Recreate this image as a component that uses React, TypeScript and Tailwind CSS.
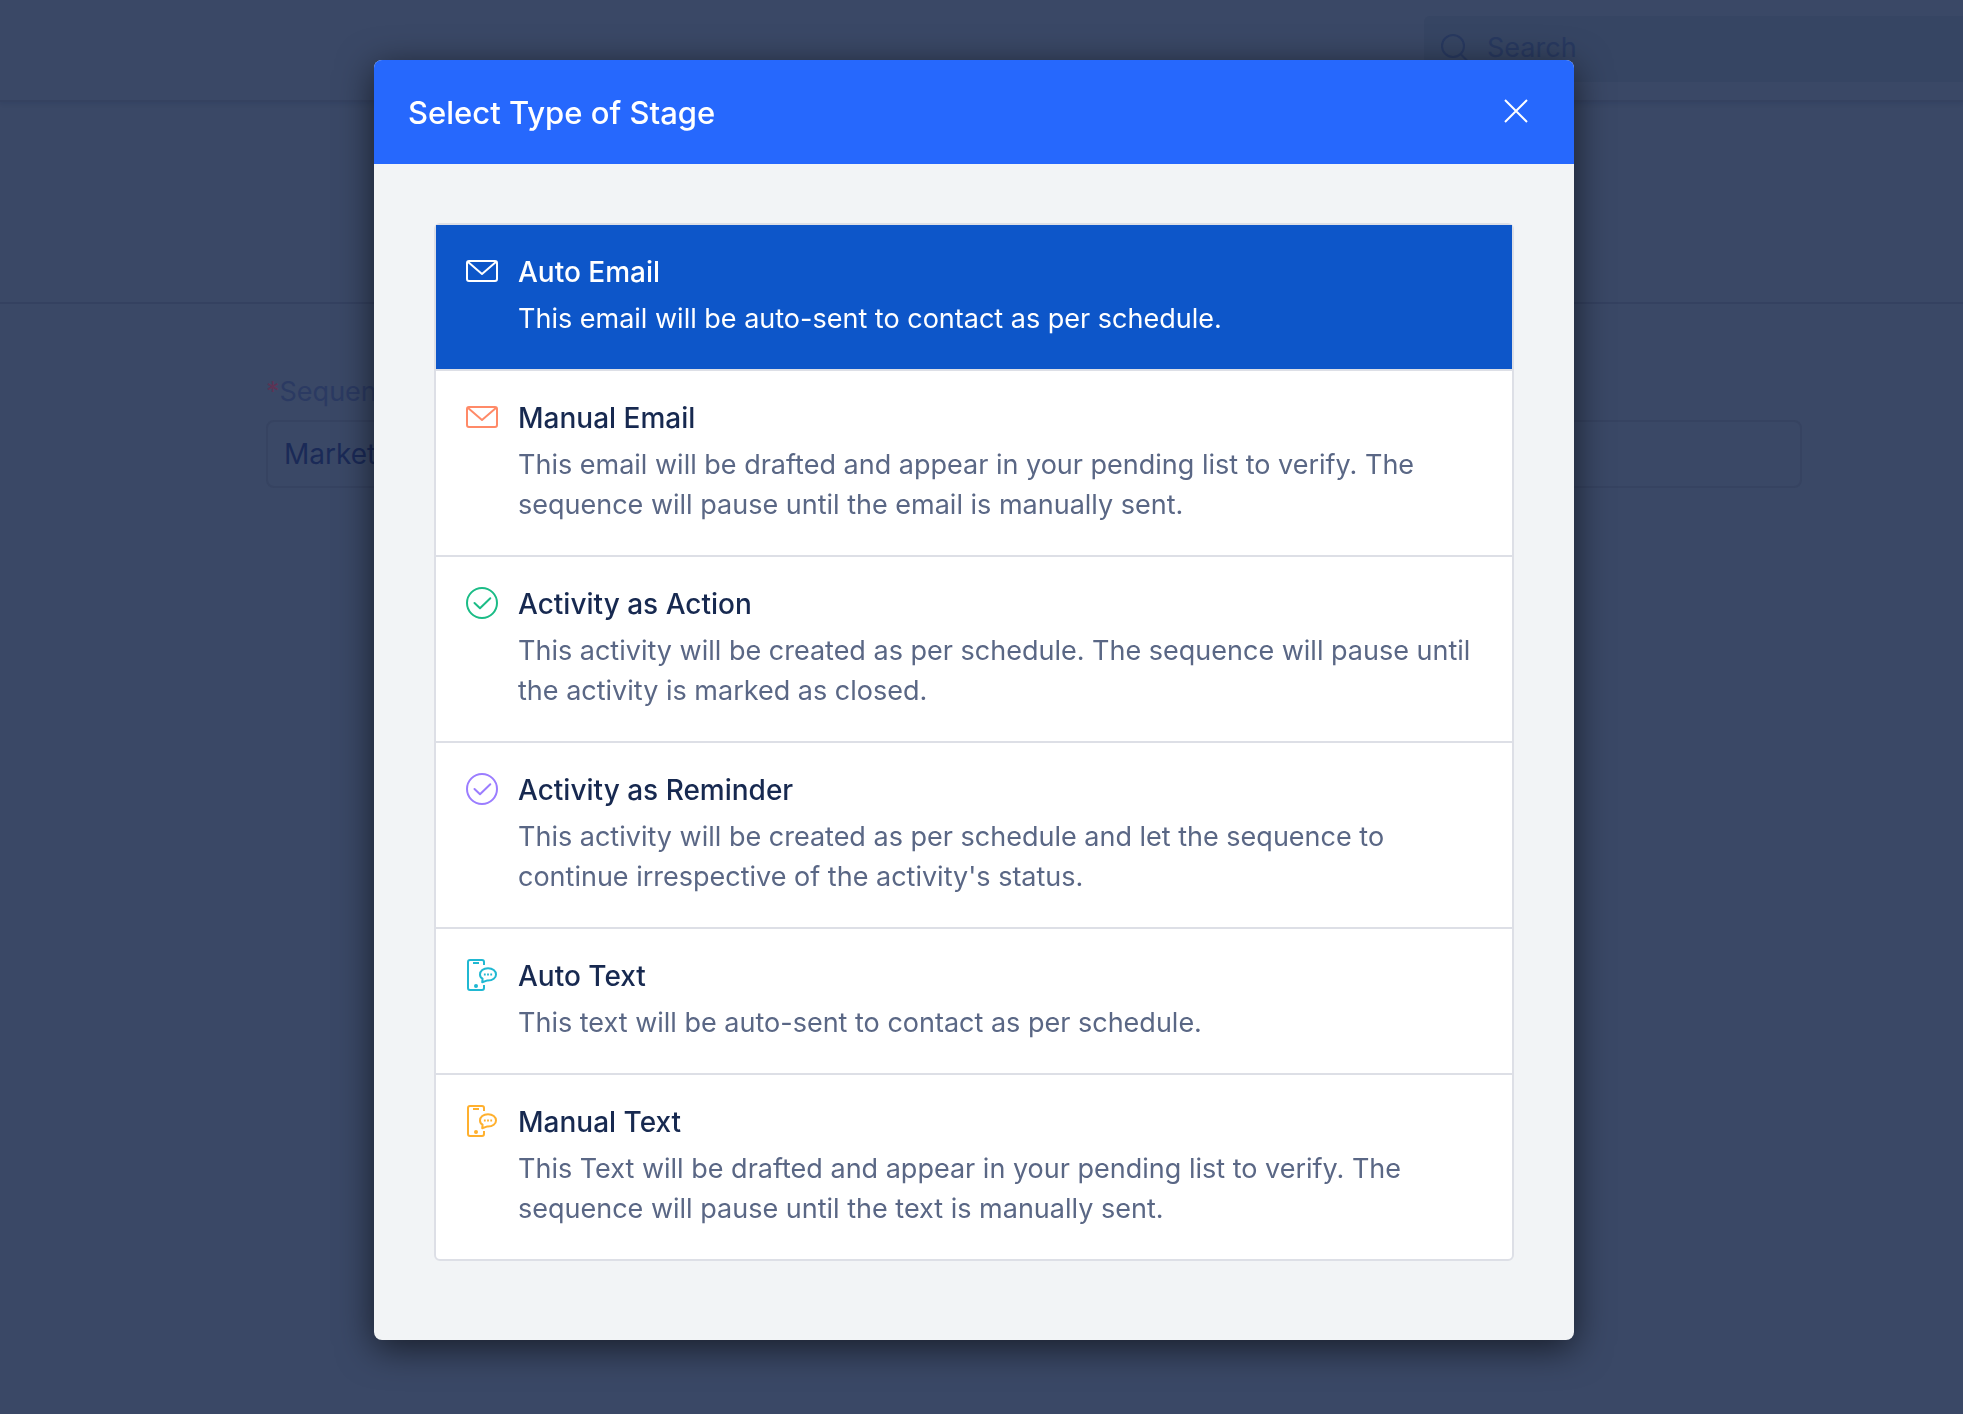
import { useState, type ReactNode } from "react";

type Stage = {
  id: string;
  title: string;
  description: string;
  color: string;
  icon: ReactNode;
};

function MailIcon() {
  return (
    <svg viewBox="0 0 32 32" className="size-8" fill="none" stroke="currentColor" strokeWidth="2" strokeLinejoin="round" aria-hidden="true">
      <rect x="1" y="6" width="30" height="20" rx="2" />
      <path d="M1.8 6.8 16 19 30.2 6.8" />
    </svg>
  );
}

function CheckCircleIcon() {
  return (
    <svg viewBox="0 0 32 32" className="size-8" fill="none" stroke="currentColor" strokeWidth="2" strokeLinecap="round" strokeLinejoin="round" aria-hidden="true">
      <circle cx="16" cy="16" r="15" />
      <path d="M8.5 16 14 21.2 24.3 11.2" />
    </svg>
  );
}

function PhoneChatIcon() {
  return (
    <svg viewBox="0 0 32 32" className="size-8" fill="none" stroke="currentColor" strokeWidth="2" aria-hidden="true">
      <path d="M18 6V3a2 2 0 0 0-2-2H4a2 2 0 0 0-2 2v26a2 2 0 0 0 2 2h12a2 2 0 0 0 2-2v-3" />
      <path d="M7 4h6" />
      <circle cx="10" cy="27" r="2" fill="currentColor" stroke="none" />
      <path d="M16.6 19.6C14.6 18.6 14 17 14 15.4 14 11.9 17.3 9.2 22 9.2s8 2.7 8 6.2-3.3 6.2-8 6.2h-1.2L16.2 23.2z" strokeLinejoin="round" />
      <path d="M17.900 15.4h1.8M21.100 15.4h1.8M24.300 15.4h1.8" />
    </svg>
  );
}

const stages: Stage[] = [
  {
    id: "auto-email",
    title: "Auto Email",
    description: "This email will be auto-sent to contact as per schedule.",
    color: "text-[#2668fd]",
    icon: <MailIcon />,
  },
  {
    id: "manual-email",
    title: "Manual Email",
    description:
      "This email will be drafted and appear in your pending list to verify. The sequence will pause until the email is manually sent.",
    color: "text-[#ff8a68]",
    icon: <MailIcon />,
  },
  {
    id: "activity-action",
    title: "Activity as Action",
    description:
      "This activity will be created as per schedule. The sequence will pause until the activity is marked as closed.",
    color: "text-[#1bbc86]",
    icon: <CheckCircleIcon />,
  },
  {
    id: "activity-reminder",
    title: "Activity as Reminder",
    description:
      "This activity will be created as per schedule and let the sequence to continue irrespective of the activity's status.",
    color: "text-[#9b7dff]",
    icon: <CheckCircleIcon />,
  },
  {
    id: "auto-text",
    title: "Auto Text",
    description: "This text will be auto-sent to contact as per schedule.",
    color: "text-[#20b8d2]",
    icon: <PhoneChatIcon />,
  },
  {
    id: "manual-text",
    title: "Manual Text",
    description:
      "This Text will be drafted and appear in your pending list to verify. The sequence will pause until the text is manually sent.",
    color: "text-[#ffb02e]",
    icon: <PhoneChatIcon />,
  },
];

/* Page behind the dialog, already dimmed */
function Backdrop() {
  return (
    <div className="min-h-screen bg-[#3a4866]">
      <header className="flex h-[102px] justify-end border-b-2 border-[#354260] pt-4 shadow-[0_2px_4px_rgba(9,30,66,0.1)]">
        <label className="flex h-[66px] w-[539px] items-center gap-[18px] rounded-l-md bg-[#364563] pb-0.5 pl-[17px] text-[#283960]">
          <svg viewBox="0 0 28 28" className="size-7" fill="none" stroke="currentColor" strokeWidth="2" aria-hidden="true">
            <circle cx="12" cy="12" r="11" />
            <path d="m19.500 20 7.500 7.500" />
          </svg>
          <input
            type="search"
            aria-label="Search"
            placeholder="Search"
            className="min-w-0 flex-1 bg-transparent text-[27px] outline-none placeholder:text-[#283960]"
          />
        </label>
      </header>
      <div className="h-[202px] border-b-2 border-[#344160]" />
      <div className="mr-[161px] ml-[266px] flex flex-col gap-2 pt-[68px]">
        <label htmlFor="sequence-name" className="text-[27px] leading-10 text-[#2b3a62]">
          <span className="text-[#5c3354]">*</span>Sequence Name
        </label>
        <input
          id="sequence-name"
          defaultValue="Marketing"
          className="h-[68px] rounded-lg border-2 border-[#364361] bg-transparent px-4 text-[28px] text-[#1a2a57] outline-none"
        />
      </div>
    </div>
  );
}

export default function App() {
  const [selected, setSelected] = useState("auto-email");

  return (
    <div className="font-['Inter',sans-serif]">
      <Backdrop />

      <div className="fixed inset-0 flex items-start justify-center pt-[60px] pr-[15px]">
        <div
          role="dialog"
          aria-modal="true"
          aria-labelledby="dialog-title"
          className="w-full max-w-[1200px] overflow-hidden rounded-lg bg-[#f2f4f6] shadow-[0_8px_36px_rgba(0,0,0,0.6)]"
        >
          <div className="flex h-[104px] items-center justify-between bg-[#2668fd] pr-[46px] pl-[34px] text-white">
            <h2 id="dialog-title" className="pt-0.5 text-[31px] leading-10 font-medium">
              Select Type of Stage
            </h2>
            <button type="button" aria-label="Close" className="cursor-pointer pb-0.5">
              <svg viewBox="0 0 24 24" className="size-6" fill="none" stroke="currentColor" strokeWidth="2" aria-hidden="true">
                <path d="m1 1 22 22M23 1 1 23" />
              </svg>
            </button>
          </div>

          <div className="px-[60px] pt-[59px] pb-[79px]">
            <ul className="divide-y-2 divide-[#dddfe6] rounded-md border-2 border-[#dddfe6] bg-white">
              {stages.map((stage) => {
                const active = stage.id === selected;
                return (
                  <li key={stage.id}>
                    <button
                      type="button"
                      aria-pressed={active}
                      onClick={() => setSelected(stage.id)}
                      className={`flex w-full cursor-pointer items-start gap-5 px-[30px] pt-[27px] pb-[30px] text-left leading-10 ${
                        active ? "bg-[#0d56c9]" : ""
                      }`}
                    >
                      <span className={`mt-[3px] shrink-0 ${active ? "text-white" : stage.color}`}>{stage.icon}</span>
                      <span className="flex flex-col gap-[7px]">
                        <span className={`text-[28px] font-medium ${active ? "text-white" : "text-[#172950]"}`}>
                          {stage.title}
                        </span>
                        <span className={`text-[27px] ${active ? "text-white" : "text-[#5a6785]"}`}>
                          {stage.description}
                        </span>
                      </span>
                    </button>
                  </li>
                );
              })}
            </ul>
          </div>
        </div>
      </div>
    </div>
  );
}
